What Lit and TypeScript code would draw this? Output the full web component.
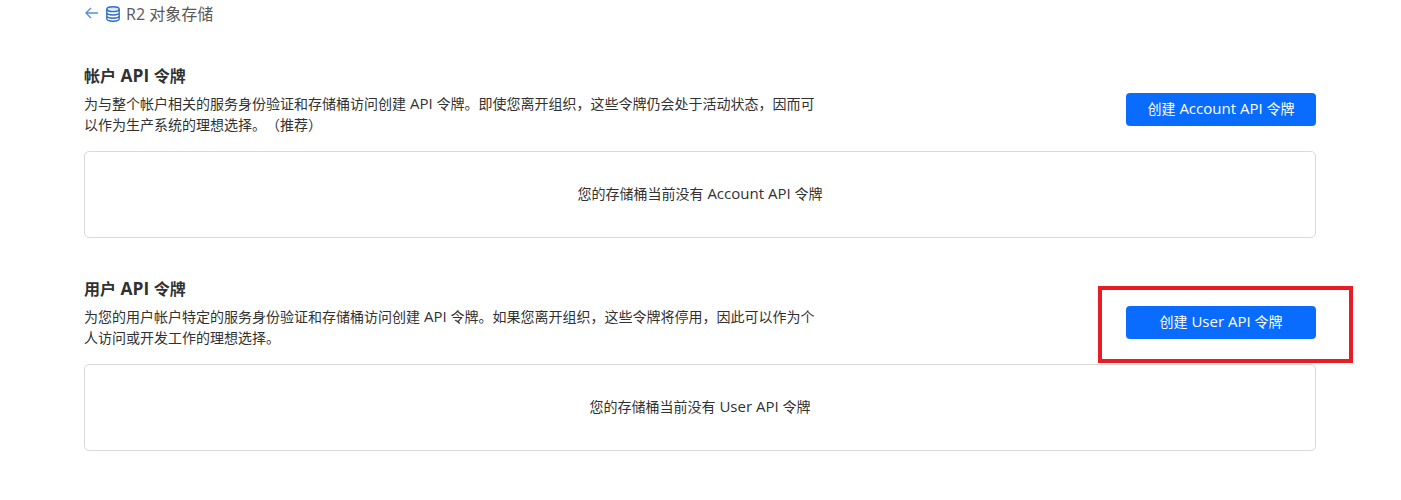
import { LitElement, html, css } from "lit";
import { customElement } from "lit/decorators.js";

const lat = (t: string) => html`<span class="lat">${t}</span>`;

@customElement("app-root")
export class AppRoot extends LitElement {
  static styles = css`
    :host { display: block; position: relative; height: 500px; background: #fff; overflow: hidden;
      font-family: "Open Sans", "Noto Sans CJK SC", sans-serif; color: #313131; text-spacing-trim: space-all; }
    .page { padding: 0 85px 0 84px; display: flex; flex-direction: column; }
    .back { display: flex; align-items: center; height: 26px; font-size: 16px; color: #595959; }
    .back svg { display: block; flex: none; }
    .arrow { margin: 0 6px 0 1px; }
    .db { margin: 1px 5px 0 0; }
    .section { display: flex; flex-direction: column; }
    .first { margin-top: 37px; }
    .second { margin-top: 38px; }
    .head { display: flex; justify-content: space-between; align-items: flex-end; }
    h2 { margin: 0 0 5px; font-size: 16px; line-height: 24px; font-weight: 700; color: #313131; }
    h2 .lat { font-size: 17.4px; }
    .lat { font-size: 15px; }
    p { margin: 0; width: 735px; font-size: 14px; line-height: 21px; color: #313131; }
    button { width: 190px; height: 33px; border: 0; border-radius: 4px; background: #0a6cff; color: #fff;
      font: inherit; font-size: 14px; padding: 0 0 4px; margin-bottom: 9px; }
    .empty { margin-top: 16px; box-sizing: border-box; height: 87px; padding-bottom: 4px; border: 1px solid #d9d9d9; border-radius: 5px;
      display: flex; align-items: center; justify-content: center; font-size: 14px; color: #313131; white-space: pre; }
    .mark { position: absolute; left: 1098px; top: 286px; width: 247px; height: 69px;
      border: 4px solid #e81c24; pointer-events: none; }
  `;

  private section(cls: string, title: unknown, desc: unknown, btn: unknown, empty: unknown) {
    return html`<section class="section ${cls}">
      <div class="head">
        <div>
          <h2>${title}</h2>
          <p>${desc}</p>
        </div>
        <button>${btn}</button>
      </div>
      <div class="empty"><span>${empty}</span></div>
    </section>`;
  }

  render() {
    return html`<div class="page">
        <div class="back">
          <svg class="arrow" width="14" height="12" viewBox="0 0 14 12" fill="none" stroke="#5a8fd8" stroke-width="1.4">
            <path d="M13 6H1.2M6 1L1 6l5 5" />
          </svg>
          <svg class="db" width="16" height="16" viewBox="0 0 16 16" fill="none" stroke="#2f6fc4" stroke-width="1.4">
            <ellipse cx="8" cy="3.2" rx="6.2" ry="2.4" fill="#dbe8f8" />
            <path d="M1.8 3.2v9.6c0 1.3 2.8 2.4 6.2 2.4s6.2-1.1 6.2-2.4V3.2M1.8 6.6c0 1.3 2.8 2.4 6.2 2.4s6.2-1.1 6.2-2.4M1.8 9.8c0 1.3 2.8 2.4 6.2 2.4s6.2-1.1 6.2-2.4" />
          </svg>
          <span>R2 对象存储</span>
        </div>
        ${this.section(
          "first",
          html`帐户${lat(" API ")}令牌`,
          html`<span>为与整个帐户相关的服务身份验证和存储桶访问创建</span>${lat(" API ")}<span>令牌。即使您离开组织，这些令牌仍会处于活动状态，因而可</span><span>以作为生产系统的理想选择。（推荐）</span>`,
          html`创建${lat(" Account API ")}令牌`,
          html`您的存储桶当前没有${lat(" Account API ")}令牌`
        )}
        ${this.section(
          "second",
          html`用户${lat(" API ")}令牌`,
          html`<span>为您的用户帐户特定的服务身份验证和存储桶访问创建</span>${lat(" API ")}<span>令牌。如果您离开组织，这些令牌将停用，因此可以作为个</span><span>人访问或开发工作的理想选择。</span>`,
          html`创建${lat(" User API ")}令牌`,
          html`您的存储桶当前没有${lat(" User API ")}令牌`
        )}
      </div>
      <div class="mark"></div>`;
  }
}
